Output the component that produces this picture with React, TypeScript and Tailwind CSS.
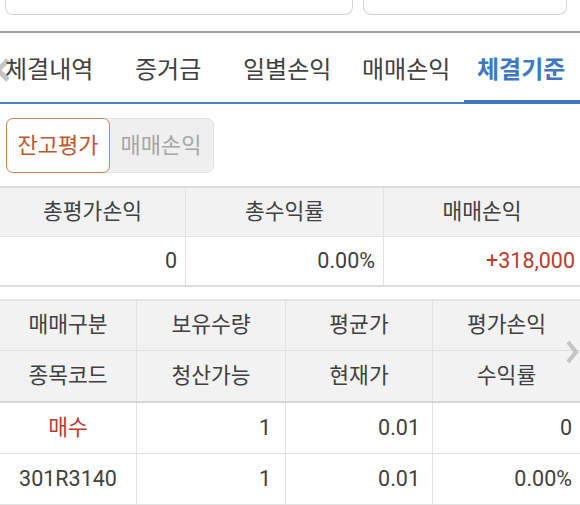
const font = { fontFamily: '"Roboto", "Noto Sans CJK KR", sans-serif' };

const tabs = [
  { label: "체결내역", cls: "w-[120px] pl-[5px]" },
  { label: "증거금", cls: "w-[110px] pl-[15px]" },
  { label: "일별손익", cls: "w-[120px] pl-[13px]" },
  { label: "매매손익", cls: "w-[114px] pl-[12px]" },
];

export default function App() {
  return (
    <div className="relative w-[580px] h-[505px] overflow-hidden bg-white text-[#404040]" style={font}>
      {/* input boxes cut off at top */}
      <div className="flex gap-[10px] pl-[5px] pr-[13px] h-[16px] -mt-[1px]">
        <div className="flex-1 rounded-b-[8px] border border-t-0 border-[#d4d4d4]" />
        <div className="w-[204px] rounded-b-[8px] border border-t-0 border-[#d4d4d4]" />
      </div>
      <div className="mt-[16px] h-[2px] bg-[#a0a0a0]" />

      {/* tabs */}
      <div className="relative flex h-[71px] items-center border-b-2 border-[#4a80c4] text-[24px]">
        <div className="absolute -left-[7px] top-[24px]">
          <svg width="18" height="26" viewBox="0 0 18 26">
            <path d="M15 3 L5 13 L15 23" fill="none" stroke="#c4c4c4" strokeWidth="5" />
          </svg>
        </div>
        {tabs.map((t) => (
          <div key={t.label} className={"relative h-full flex items-center pt-[5px] " + t.cls}>
            {t.label}
          </div>
        ))}
        <div className="relative flex-1 h-full flex items-center pt-[5px] pl-[13px] font-bold text-[#3d79c2]">
          체결기준
          <div className="absolute left-0 right-0 -bottom-[2px] h-[4px] bg-[#3d79c2]" />
        </div>
      </div>

      {/* segmented control */}
      <div className="mt-[14px] ml-[6px] flex w-[208px] h-[55px] rounded-[7px] bg-[#efefef] border border-[#e2e2e2] text-[22px]">
        <div className="w-[104px] -m-[1px] flex items-center justify-center rounded-[7px] border border-[#c9855c] bg-white text-[#c4542a]">
          잔고평가
        </div>
        <div className="flex-1 flex items-center justify-center text-[#a6a6a6]">매매손익</div>
      </div>

      {/* summary table */}
      <div className="mt-[13px] border-y-2 border-[#dcdcdc] text-[21.5px]">
        <div className="grid grid-cols-[186px_198px_1fr] h-[49px] bg-[#f2f2f2] border-b border-[#e2e2e2]">
          <div className="flex items-center justify-center border-r border-[#e2e2e2]">총평가손익</div>
          <div className="flex items-center justify-center border-r border-[#e2e2e2]">총수익률</div>
          <div className="flex items-center justify-center">매매손익</div>
        </div>
        <div className="grid grid-cols-[186px_198px_1fr] h-[48px]">
          <div className="flex items-center justify-end pr-[8px] border-r border-[#e2e2e2]">0</div>
          <div className="flex items-center justify-end pr-[8px] border-r border-[#e2e2e2]">0.00%</div>
          <div className="flex items-center justify-end pr-[5px] text-[#c0392b]">+318,000</div>
        </div>
      </div>

      {/* holdings table */}
      <div className="relative mt-[12px] border-t-2 border-[#e4e4e4] text-[21.5px]">
        <div className="bg-[#f2f2f2] border-b-2 border-[#d8d8d8]">
          <div className="grid grid-cols-[137px_149px_147px_1fr] h-[50px] border-b border-[#e0e0e0]">
            <div className="flex items-center justify-center border-r border-[#e2e2e2]">매매구분</div>
            <div className="flex items-center justify-center border-r border-[#e2e2e2]">보유수량</div>
            <div className="flex items-center justify-center border-r border-[#e2e2e2]">평균가</div>
            <div className="flex items-center justify-center">평가손익</div>
          </div>
          <div className="grid grid-cols-[137px_149px_147px_1fr] h-[50px]">
            <div className="flex items-center justify-center border-r border-[#e2e2e2]">종목코드</div>
            <div className="flex items-center justify-center border-r border-[#e2e2e2]">청산가능</div>
            <div className="flex items-center justify-center border-r border-[#e2e2e2]">현재가</div>
            <div className="flex items-center justify-center">수익률</div>
          </div>
        </div>
        <div className="grid grid-cols-[137px_149px_147px_1fr] h-[51px] border-b border-[#e2e2e2]">
          <div className="flex items-center justify-center border-r border-[#e2e2e2] text-[#c0392b]">매수</div>
          <div className="flex items-center justify-end pr-[14px] border-r border-[#e2e2e2]">1</div>
          <div className="flex items-center justify-end pr-[12px] border-r border-[#e2e2e2]">0.01</div>
          <div className="flex items-center justify-end pr-[8px]">0</div>
        </div>
        <div className="grid grid-cols-[137px_149px_147px_1fr] h-[51px] border-b border-[#e2e2e2]">
          <div className="flex items-center justify-center border-r border-[#e2e2e2]">301R3140</div>
          <div className="flex items-center justify-end pr-[14px] border-r border-[#e2e2e2]">1</div>
          <div className="flex items-center justify-end pr-[12px] border-r border-[#e2e2e2]">0.01</div>
          <div className="flex items-center justify-end pr-[8px]">0.00%</div>
        </div>
        <div className="absolute right-[1px] top-[38px]">
          <svg width="14" height="26" viewBox="0 0 14 26">
            <path d="M3 3 L11 13 L3 23" fill="none" stroke="#c4c4c4" strokeWidth="4" />
          </svg>
        </div>
      </div>
    </div>
  );
}
